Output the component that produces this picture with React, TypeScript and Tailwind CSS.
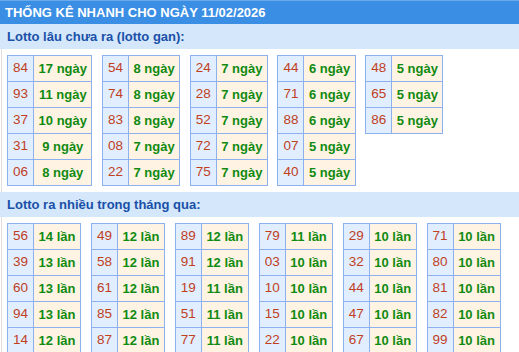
import React from "react";

type Row = [string, string];

const gan: Row[][] = [
  [["84", "17"], ["93", "11"], ["37", "10"], ["31", "9"], ["06", "8"]],
  [["54", "8"], ["74", "8"], ["83", "8"], ["08", "7"], ["22", "7"]],
  [["24", "7"], ["28", "7"], ["52", "7"], ["72", "7"], ["75", "7"]],
  [["44", "6"], ["71", "6"], ["88", "6"], ["07", "5"], ["40", "5"]],
  [["48", "5"], ["65", "5"], ["86", "5"]],
];

const nhieu: Row[][] = [
  [["56", "14"], ["39", "13"], ["60", "13"], ["94", "13"], ["14", "12"]],
  [["49", "12"], ["58", "12"], ["61", "12"], ["85", "12"], ["87", "12"]],
  [["89", "12"], ["91", "12"], ["19", "11"], ["51", "11"], ["77", "11"]],
  [["79", "11"], ["03", "10"], ["10", "10"], ["15", "10"], ["22", "10"]],
  [["29", "10"], ["32", "10"], ["44", "10"], ["47", "10"], ["67", "10"]],
  [["71", "10"], ["80", "10"], ["81", "10"], ["82", "10"], ["99", "10"]],
];

function Table({ rows, unit }: { rows: Row[]; unit: string }) {
  return (
    <div className="grid grid-cols-[auto_auto] shrink-0 self-start border-l border-t border-[#8db0ef]">
      {rows.map(([n, c], i) => (
        <React.Fragment key={i}>
          <div className="h-[26px] px-[5px] flex items-center justify-center whitespace-nowrap bg-[#e1eeff] border-r border-b border-[#8db0ef] text-[13.5px] text-[#c0401e]">
            {n}
          </div>
          <div className="h-[26px] px-[4.5px] flex items-center justify-center whitespace-nowrap bg-[#fff4e4] border-r border-b border-[#8db0ef] text-[13px] font-bold text-[#118a11]">
            {c} {unit}
          </div>
        </React.Fragment>
      ))}
    </div>
  );
}

function SubHeader({ children }: { children: React.ReactNode }) {
  return (
    <div className="h-[25px] bg-[#d4e7fb] pl-[7px] flex items-center whitespace-nowrap text-[13px] font-bold text-[#1a50a8]">
      {children}
    </div>
  );
}

export default function App() {
  return (
    <div
      className="w-[519px] h-[352px] overflow-hidden bg-white"
      style={{ fontFamily: '"Liberation Sans", Arial, sans-serif' }}
    >
      <div className="h-[24px] bg-[#3a8ee4] border-t border-[#6aa9ec] pl-[5px] flex items-center whitespace-nowrap text-[13px] font-bold text-white">
        THỐNG KÊ NHANH CHO NGÀY 11/02/2026
      </div>
      <SubHeader>Lotto lâu chưa ra (lotto gan):</SubHeader>
      <div className="ml-px border-l border-[#dedede] pl-[5px] py-[6px] flex items-start gap-[9.5px]">
        {gan.map((t, i) => (
          <Table key={i} rows={t} unit="ngày" />
        ))}
      </div>
      <SubHeader>Lotto ra nhiều trong tháng qua:</SubHeader>
      <div className="ml-px border-l border-[#dedede] pl-[5px] py-[6px] flex items-start gap-[10px]">
        {nhieu.map((t, i) => (
          <Table key={i} rows={t} unit="lần" />
        ))}
      </div>
    </div>
  );
}
